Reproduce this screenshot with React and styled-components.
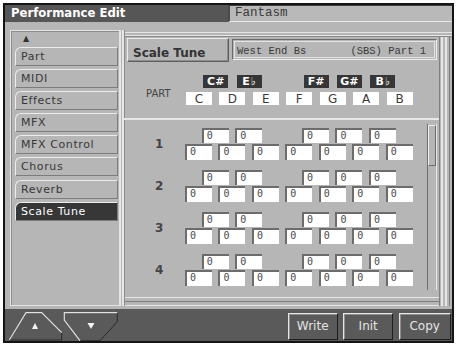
import styled, { createGlobalStyle } from "styled-components";

const GlobalStyle = createGlobalStyle`
  html, body {
    margin: 0;
    padding: 0;
    background: #ffffff;
  }
  body {
    font-family: "DejaVu Sans", "Liberation Sans", sans-serif;
  }
`;

const Screen = styled.div`
  box-sizing: border-box;
  width: 451px;
  height: 340px;
  margin: 3px 0 0 3px;
  border: 2px solid #141414;
  background: #b6b6b6;
  display: flex;
  flex-direction: column;
`;

const TitleBar = styled.div`
  display: flex;
  height: 17px;
  flex: none;
`;

const TitleText = styled.div`
  box-sizing: border-box;
  width: 223px;
  background: #565656;
  color: #ffffff;
  font-weight: bold;
  font-size: 11.7px;
  line-height: 17px;
  padding-left: 6px;
`;

const NameField = styled.div`
  flex: 1;
  box-sizing: border-box;
  background: #b9b9b9;
  border-top: 1px solid #3c3c3c;
  border-left: 2px solid #4a4a4a;
  border-bottom: 1px solid #e8e8e8;
  font-family: "Liberation Mono", monospace;
  font-size: 12.5px;
  line-height: 15px;
  color: #3a3a3a;
  padding-left: 5px;
`;

const Main = styled.div`
  flex: 1;
  display: flex;
  padding: 8px 0 3px 5px;
`;

/* left column with the page tabs */
const LeftPanel = styled.div`
  box-sizing: border-box;
  width: 110px;
  border: 1px solid #e4e4e4;
  box-shadow: inset 1px 1px 0 #8c8c8c;
  padding: 0 1px 0 4px;
  display: flex;
  flex-direction: column;
`;

const ScrollArrow = styled.div`
  height: 16px;
  font-size: 8px;
  line-height: 16px;
  color: #333333;
  padding-left: 8px;
`;

const TabList = styled.div`
  display: flex;
  flex-direction: column;
  gap: 3.1px;
`;

const Tab = styled.div`
  box-sizing: border-box;
  height: 19px;
  border: 1px solid #ececec;
  border-right-color: #7c7c7c;
  border-bottom-color: #7c7c7c;
  border-top-left-radius: 6px;
  background: ${(props) => (props.$active ? "#373737" : "#b6b6b6")};
  color: ${(props) => (props.$active ? "#ffffff" : "#383838")};
  font-size: 11px;
  letter-spacing: 0.6px;
  line-height: 17px;
  padding-left: 5px;
  white-space: nowrap;
`;

/* right side frame */
const RightPanel = styled.div`
  flex: 1;
  display: flex;
  flex-direction: column;
  padding: 8px 13px 9px 6.5px;
  box-shadow:
    inset 1px 0 0 #e6e6e6,
    inset 2px 0 0 #b6b6b6,
    inset 4px 0 0 #e6e6e6,
    inset 5px 0 0 #8a8a8a,
    inset 0 2px 0 #b6b6b6,
    inset 0 3px 0 #e6e6e6,
    inset 0 5px 0 #b6b6b6,
    inset 0 6px 0 #e6e6e6,
    inset 0 7px 0 #8a8a8a,
    inset -2px 0 0 #b6b6b6,
    inset -3px 0 0 #7e7e7e,
    inset -5px 0 0 #b6b6b6,
    inset -7px 0 0 #e6e6e6,
    inset -9px 0 0 #b6b6b6,
    inset -11px 0 0 #e6e6e6,
    inset -12px 0 0 #b6b6b6,
    inset -13px 0 0 #7e7e7e,
    inset 0 -1px 0 #e6e6e6,
    inset 0 -4px 0 #b6b6b6,
    inset 0 -5px 0 #7e7e7e,
    inset 0 -8px 0 #b6b6b6,
    inset 0 -9px 0 #e6e6e6;
`;

const Header = styled.div`
  display: flex;
  align-items: flex-start;
  gap: 3.5px;
  height: 24px;
  margin-right: 2px;
  flex: none;
`;

const HeaderTitle = styled.div`
  box-sizing: border-box;
  width: 102px;
  height: 24px;
  border: 1px solid;
  border-color: #ececec #5e5e5e #5e5e5e #ececec;
  box-shadow: inset -1px -1px 0 #8e8e8e;
  font-weight: bold;
  font-size: 12px;
  line-height: 14px;
  color: #333333;
  padding: 7px 0 0 5.5px;
`;

const PatchField = styled.div`
  flex: 1;
  box-sizing: border-box;
  height: 21px;
  margin-top: 1px;
  border: 1px solid;
  border-color: #6a6a6a #ececec #ececec #6a6a6a;
  box-shadow: inset 0 0 0 1px #b6b6b6, inset 0 0 0 2px #e2e2e2;
  font-family: "Liberation Mono", monospace;
  font-size: 10.5px;
  line-height: 14px;
  color: #3a3a3a;
  padding: 4px 0 0 4px;
  white-space: pre;
`;

const KeyGrid = styled.div`
  display: grid;
  grid-template-columns: 59.5px repeat(14, 16.73px);
  grid-template-rows: 13px 13.5px;
  row-gap: 3.5px;
  margin-top: 13px;
  flex: none;
`;

const PartLabel = styled.div`
  grid-row: 2;
  grid-column: 1;
  font-size: 10px;
  color: #444444;
  padding-left: 19.5px;
  margin-top: -4px;
  line-height: 12px;
`;

const KeyLabel = styled.div`
  grid-row: ${(props) => (props.$black ? 1 : 2)};
  grid-column: ${(props) => props.$col} / span 2;
  width: ${(props) => (props.$black ? 25 : 26)}px;
  background: ${(props) => (props.$black ? "#363636" : "#ffffff")};
  color: ${(props) => (props.$black ? "#ffffff" : "#3a3a3a")};
  font-weight: ${(props) => (props.$black ? "bold" : "normal")};
  font-size: ${(props) => (props.$black ? 11 : 12)}px;
  line-height: ${(props) => (props.$black ? 13 : 14)}px;
  text-align: center;
  margin-left: ${(props) => (props.$black ? 0.5 : 0)}px;
  white-space: nowrap;
`;

const Flat = styled.span`
  font-size: 11px;
  font-weight: bold;
  margin-left: 1px;
`;

const Separator = styled.div`
  height: 3px;
  margin: 13px 0 0 -4px;
  border-top: 2px solid #e8e8e8;
  box-sizing: border-box;
  flex: none;
`;

const ScrollArea = styled.div`
  flex: 1;
  display: flex;
  min-height: 0;
`;

const Rows = styled.div`
  flex: 1;
  display: flex;
  flex-direction: column;
  gap: 9.6px;
  padding-top: 7px;
  overflow: hidden;
`;

const TuneRow = styled.div`
  display: grid;
  grid-template-columns: 59.5px repeat(14, 16.73px);
  grid-template-rows: 15px 16px;
  row-gap: 1.3px;
`;

const RowNumber = styled.div`
  grid-row: 1 / span 2;
  grid-column: 1;
  align-self: center;
  text-align: center;
  padding-left: 6px;
  font-weight: bold;
  font-size: 12px;
  color: #444444;
`;

const Field = styled.div`
  grid-row: ${(props) => (props.$upper ? 1 : 2)};
  grid-column: ${(props) => props.$col} / span 2;
  box-sizing: border-box;
  width: 27px;
  margin-left: -1px;
  background: #ffffff;
  border-top: 2px solid #6c6c6c;
  border-left: 2px solid #6c6c6c;
  font-family: "DejaVu Sans Mono", monospace;
  font-size: 10px;
  line-height: 12px;
  color: #484848;
  padding-left: 3px;
`;

const ScrollBar = styled.div`
  box-sizing: border-box;
  width: 10px;
  margin: 3px 2px 7px 0;
  border-left: 1px solid #6e6e6e;
  border-right: 1px solid #e6e6e6;
  padding-top: 1px;
`;

const ScrollThumb = styled.div`
  box-sizing: border-box;
  height: 41px;
  border: 1px solid;
  border-color: #f0f0f0 #6a6a6a #6a6a6a #f0f0f0;
  background: #b6b6b6;
`;

const BottomBar = styled.div`
  height: 32px;
  flex: none;
  background: #5a5a5a;
  display: flex;
  justify-content: space-between;
  align-items: flex-start;
`;

const Actions = styled.div`
  display: flex;
  gap: 5.5px;
  padding: 3.7px 1.3px 0 0;
`;

const ActionButton = styled.div`
  box-sizing: border-box;
  width: ${(props) => props.$w}px;
  height: 27px;
  border: 1px solid;
  border-color: #e6e6e6 #1e1e1e #1e1e1e #e6e6e6;
  box-shadow: inset 1px 1px 0 #8e8e8e;
  background: #5a5a5a;
  color: #e4e4e4;
  font-size: 12px;
  line-height: 25px;
  text-align: center;
`;

const NavArrows = () => (
  <svg width="120" height="32" viewBox="0 0 120 32">
    <polygon
      points="4.3,31 21,3.7 36.7,3.7 56.7,23.7 56.7,31"
      fill="#5a5a5a"
      stroke="#2a2a2a"
      strokeWidth="1"
    />
    <polyline
      points="4.3,31 21,3.7 36.7,3.7 56.7,23.7"
      fill="none"
      stroke="#e2e2e2"
      strokeWidth="1.2"
    />
    <polygon points="27,20 30,14 33,20" fill="#f4f4f4" />
    <polygon
      points="59.3,3.7 112.3,3.7 112.3,12.7 95,31.7 75,31.7 59.3,11"
      fill="#5a5a5a"
      stroke="#2a2a2a"
      strokeWidth="1"
    />
    <polyline
      points="75,31.7 59.3,11 59.3,3.7 112.3,3.7"
      fill="none"
      stroke="#e2e2e2"
      strokeWidth="1.2"
    />
    <polygon points="82.5,14 89.5,14 86,20" fill="#f4f4f4" />
  </svg>
);

const tabs = [
  "Part",
  "MIDI",
  "Effects",
  "MFX",
  "MFX Control",
  "Chorus",
  "Reverb",
  "Scale Tune",
];

const whiteKeys = ["C", "D", "E", "F", "G", "A", "B"];
const blackKeys = [
  { name: "C#", col: 3 },
  { name: "E", flat: true, col: 5 },
  { name: "F#", col: 9 },
  { name: "G#", col: 11 },
  { name: "B", flat: true, col: 13 },
];

const ScaleRow = ({ number }) => (
  <TuneRow>
    <RowNumber>{number}</RowNumber>
    {blackKeys.map((k) => (
      <Field key={k.col} $upper $col={k.col}>
        0
      </Field>
    ))}
    {whiteKeys.map((k, i) => (
      <Field key={k} $col={2 + i * 2}>
        0
      </Field>
    ))}
  </TuneRow>
);

export default function App() {
  return (
    <>
      <GlobalStyle />
      <Screen>
        <TitleBar>
          <TitleText>Performance Edit</TitleText>
          <NameField>Fantasm</NameField>
        </TitleBar>
        <Main>
          <LeftPanel>
            <ScrollArrow>▲</ScrollArrow>
            <TabList>
              {tabs.map((t) => (
                <Tab key={t} $active={t === "Scale Tune"}>
                  {t}
                </Tab>
              ))}
            </TabList>
          </LeftPanel>
          <RightPanel>
            <Header>
              <HeaderTitle>Scale Tune</HeaderTitle>
              <PatchField>{"West End Bs       (SBS) Part 1"}</PatchField>
            </Header>
            <KeyGrid>
              <PartLabel>PART</PartLabel>
              {blackKeys.map((k) => (
                <KeyLabel key={k.col} $black $col={k.col}>
                  {k.name}
                  {k.flat && <Flat>{"\u266d"}</Flat>}
                </KeyLabel>
              ))}
              {whiteKeys.map((k, i) => (
                <KeyLabel key={k} $col={2 + i * 2}>
                  {k}
                </KeyLabel>
              ))}
            </KeyGrid>
            <Separator />
            <ScrollArea>
              <Rows>
                {[1, 2, 3, 4].map((n) => (
                  <ScaleRow key={n} number={n} />
                ))}
              </Rows>
              <ScrollBar>
                <ScrollThumb />
              </ScrollBar>
            </ScrollArea>
          </RightPanel>
        </Main>
        <BottomBar>
          <NavArrows />
          <Actions>
            <ActionButton $w={50}>Write</ActionButton>
            <ActionButton $w={50}>Init</ActionButton>
            <ActionButton $w={52}>Copy</ActionButton>
          </Actions>
        </BottomBar>
      </Screen>
    </>
  );
}
